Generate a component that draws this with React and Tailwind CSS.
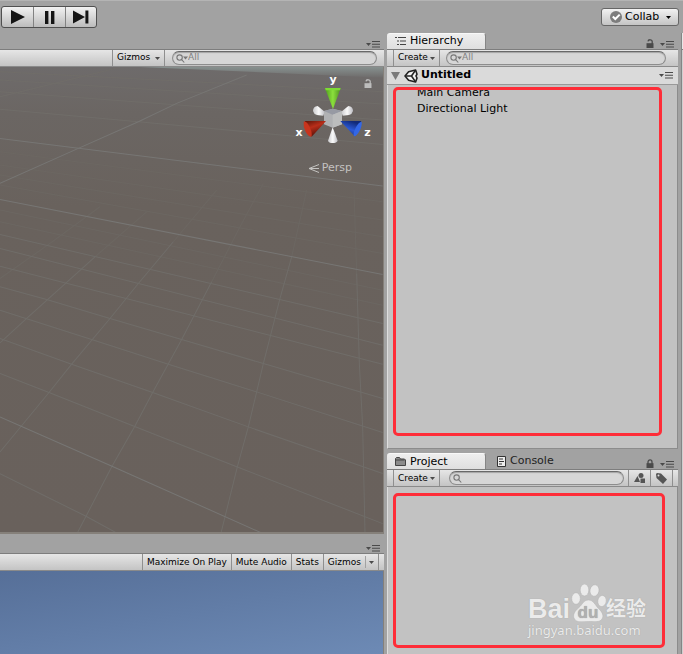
import clsx from 'clsx'

function MenuIcon() {
	return (
		<svg className="h-[7px] w-[14px]" viewBox="0 0 14 7" fill="#4a4a4a">
			<path d="M0 2h5l-2.5 3z" />
			<path d="M6 0h8v1H6zM6 2.7h8v1H6zM6 5.4h8v1H6z" />
		</svg>
	)
}

function PanelMenu({ label }) {
	return (
		<button aria-label={label} className="flex">
			<MenuIcon />
		</button>
	)
}

function Caret() {
	return (
		<svg className="h-[3px] w-[5px]" viewBox="0 0 5 3" fill="#4a4a4a">
			<path d="M0 0h5L2.5 3z" />
		</svg>
	)
}

function Lock({ open, className }) {
	return (
		<svg className={clsx('h-[9px] w-[8px]', className)} viewBox="0 0 8 9" fill="none">
			<path fill="currentColor" d="M.5 4.2h7V9h-7z" />
			<path stroke="currentColor" strokeWidth="1.3" d={open ? 'M2 2.4C2.2.2 6.2.2 6.2 2.6V5' : 'M2 5V3C2 .2 6 .2 6 3v2'} />
		</svg>
	)
}

function Toolbar({ children }) {
	return (
		<div className="flex h-[18px] shrink-0 border-y border-t-[#7d7d7d] border-b-[#8a8a8a] bg-linear-to-b from-[#e6e6e6] to-[#c4c4c4] text-[9px]">
			{children}
		</div>
	)
}

function ToolButton({ children, label, className }) {
	return (
		<button aria-label={label} className={clsx('flex items-center whitespace-nowrap border-[#8f8f8f]', className)}>
			{children}
		</button>
	)
}

function Search({ label, placeholder, arrow, className }) {
	return (
		<label
			className={clsx(
				'flex h-[14px] min-w-0 flex-1 items-center self-center rounded-full border border-[#8d8d8d] border-t-[#686868] bg-[#d6d6d6] pl-[3px] shadow-[inset_0_1px_1px_#a5a5a5]',
				className,
			)}
		>
			<svg className="h-[9px] w-[12px] shrink-0" viewBox="0 0 12 9" fill="none" stroke="#777" strokeWidth="1.1">
				<circle cx="3.6" cy="3.6" r="2.7" />
				<path d="M5.6 5.6 8.3 8.5" />
				{arrow && <path fill="#777" stroke="none" d="M7 2.5h5L9.5 5.5z" />}
			</svg>
			<input aria-label={label} placeholder={placeholder} className="w-full min-w-0 bg-transparent text-[9px] outline-none placeholder:text-[#808080]" />
		</label>
	)
}

function Tab({ active, children }) {
	return (
		<button
			className={clsx(
				'flex h-4 w-[99px] items-center gap-1 pl-2 text-[11px]',
				active
					? 'rounded-t-[3px] border-t border-r border-t-[#f8f8f8] border-r-[#858585] bg-linear-to-b from-[#eeeeee] to-[#dfdfdf] text-black'
					: 'text-[#222]',
			)}
		>
			{children}
		</button>
	)
}

function TopBar() {
	return (
		<header className="flex h-[33px] shrink-0 items-start justify-between border-t border-[#b4b4b4] pr-1 pl-px">
			<div className="mt-[5px] flex h-[22px] divide-x divide-[#828282] overflow-hidden rounded-[3px] border border-[#505050] bg-linear-to-b from-[#f2f2f2] to-[#bcbcbc]">
				<button aria-label="Play" className="flex w-8 items-center justify-center">
					<svg className="h-[14px] w-4" viewBox="0 0 16 14" fill="#151515"><path d="M1 0 15 7 1 14z" /></svg>
				</button>
				<button aria-label="Pause" className="flex w-8 items-center justify-center">
					<svg className="h-[13px] w-[10px]" viewBox="0 0 10 13" fill="#151515"><path d="M0 0h3.4v13H0zM6 0h3.4v13H6z" /></svg>
				</button>
				<button aria-label="Step" className="flex w-[30px] items-center justify-center">
					<svg className="h-[14px] w-4" viewBox="0 0 16 14" fill="#151515"><path d="M0 .5 12 7 0 13.5zM12.4.5h3v13h-3z" /></svg>
				</button>
			</div>
			<button className="mt-[7px] flex h-[18px] w-[78px] items-center rounded-[3px] border border-[#666] bg-linear-to-b from-[#f2f2f2] to-[#c4c4c4] pl-2 text-[11px]">
				<svg className="mr-[3px] h-3 w-3" viewBox="0 0 12 12" fill="none">
					<circle cx="6" cy="6" r="6" fill="#7d7d7d" />
					<path stroke="#fff" strokeWidth="2" d="M2.8 5.5 5.3 8 9.7 3.6" />
				</svg>
				Collab
				<svg className="ml-[7px] h-[3px] w-[5px]" viewBox="0 0 5 3"><path d="M0 0h5L2.5 3z" /></svg>
			</button>
		</header>
	)
}

const majorLines = [
	'0,235 1148,378',
	'0,418 1148,643',
	'0,1070 336,1218 785,1418',
	'0,370 235,265 415,185 530,130 740,45',
]

const minorLines = [
	'0,35 1148,95',
	'0,60 1148,132',
	'0,95 1148,180',
	'0,148 415,185 1148,253',
	'0,110 360,22',
	'0,523 1148,790',
	'0,565 1148,855',
	'0,618 1148,912',
	'0,680 140,718 330,775 545,838 790,910 1148,1015',
	'0,750 275,838 505,912 770,995 1148,1117',
	'0,835 215,912 458,997 745,1100 1148,1240',
	'0,940 147,997 404,1099 712,1220 1148,1390',
	'0,1240 258,1368 350,1418',
	'0,848 80,775 285,590',
	'0,1175 147,997 215,912 330,775 415,670 520,545',
	'232,1418 336,1218 404,1099 458,997 545,838 635,665',
	'663,1418 712,1220 745,1100 770,995 790,910 840,715 875,590',
	'1095,1418 1088,1100 1078,910 1070,640',
]

const faintLines = [
	'0,450 1148,690',
	'0,485 1148,735',
	'0,275 1148,425',
	'0,315 1148,480',
	'0,345 1148,530',
	'0,375 1148,580',
	'285,590 440,455',
	'520,545 650,390',
	'635,665 720,500 790,370',
	'875,590 920,390',
	'1070,640 1062,390',
	'0,655 150,550 300,440',
]

function GridLines({ lines, color }) {
	return (
		<g stroke={color} strokeWidth="3" fill="none">
			{lines.map((points) => (
				<polyline key={points} points={points} />
			))}
		</g>
	)
}

function SceneGrid() {
	return (
		<svg className="absolute inset-0 h-full w-full" viewBox="0 21 1149 1395" preserveAspectRatio="none">
			<defs>
				<linearGradient id="ground" x1="0" y1="0" x2="0" y2="1">
					<stop offset="0" stopColor="#6e6b6b" />
					<stop offset="0.1" stopColor="#6b6663" />
					<stop offset="0.3" stopColor="#69625d" />
					<stop offset="1" stopColor="#69615c" />
				</linearGradient>
				<linearGradient id="horizon" x1="0" y1="0" x2="0" y2="1">
					<stop offset="0" stopColor="#87918f" />
					<stop offset="1" stopColor="#6e6b6b" />
				</linearGradient>
			</defs>
			<rect y="21" width="1149" height="1395" fill="url(#ground)" />
			<path d="M420 21h729v32z" fill="url(#horizon)" />
			<GridLines lines={faintLines} color="#6c6762" />
			<GridLines lines={minorLines} color="#706d69" />
			<GridLines lines={majorLines} color="#777674" />
		</svg>
	)
}

function AxisGizmo() {
	return (
		<svg className="absolute top-[6px] right-[10px] h-[78px] w-20" viewBox="39 129 240 234">
			<defs>
				<linearGradient id="axisY">
					<stop offset="0" stopColor="#4e9a1c" />
					<stop offset="0.5" stopColor="#8be03c" />
					<stop offset="1" stopColor="#4e8f20" />
				</linearGradient>
				<linearGradient id="axisX" x1="0" y1="0" x2="0.5" y2="1">
					<stop offset="0" stopColor="#5c1408" />
					<stop offset="0.45" stopColor="#b92e1a" />
					<stop offset="1" stopColor="#4f1008" />
				</linearGradient>
				<linearGradient id="axisZ" x1="0.5" y1="0" x2="0" y2="1">
					<stop offset="0" stopColor="#122a78" />
					<stop offset="0.45" stopColor="#2c5ad8" />
					<stop offset="1" stopColor="#10235c" />
				</linearGradient>
				<linearGradient id="axisBack">
					<stop offset="0" stopColor="#c9c9cc" />
					<stop offset="0.5" stopColor="#fafafa" />
					<stop offset="1" stopColor="#bcbcc2" />
				</linearGradient>
			</defs>
			<path fill="url(#axisBack)" d="M99 243q0-14 14-15l21 17-4 12-19-2q-10-3-12-12z" />
			<path fill="url(#axisBack)" d="M219 243q0-14-14-15l-21 17 4 12 19-2q10-3 12-12z" />
			<path fill="url(#axisBack)" d="M158 292 144 332q2 7 14 7t15-7z" />
			<path fill="#b0b1b3" d="M132 243 158 236l28 7v40l-28 10-26-10z" />
			<path fill="#979aa3" d="M132 243 158 236l28 7-28 11z" />
			<path fill="#bcbdbd" d="M158 254l28-11v40l-28 10z" />
			<path fill="url(#axisY)" d="M135 175h47l-23 62z" />
			<path fill="#7ddc34" d="M135 174h47l-2 7h-43z" />
			<path fill="url(#axisX)" d="M74 273h64L95 320z" />
			<path fill="#c8341d" d="M71 275q9-2 18 16t5 29q-9 0-17-15t-6-30z" />
			<path fill="url(#axisZ)" d="M181 273h63l-20 46z" />
			<path fill="#3367e6" d="M245 275q2 13-7 29t-16 15q-4-8 5-26t18-18z" />
			<g className="font-bold" fill="#fff" fontSize="33" textAnchor="middle">
				<text x="159" y="159">y</text>
				<text x="57" y="318">x</text>
				<text x="262" y="318">z</text>
			</g>
		</svg>
	)
}

function SceneColumn() {
	return (
		<main className="flex min-w-0 flex-col">
			<div className="flex h-4 shrink-0 items-end justify-end pr-1 pb-px">
				<PanelMenu label="Scene menu" />
			</div>
			<Toolbar>
				<div className="min-w-0 flex-1" />
				<ToolButton className="w-[53px] justify-between border-x px-1">
					Gizmos <Caret />
				</ToolButton>
				<Search label="Search scene" placeholder="All" arrow className="mr-[7px] ml-[7px] max-w-[205px] basis-[205px] grow-0" />
			</Toolbar>
			<section className="flex min-h-0 flex-[467] flex-col border-r border-b-2 border-[#85807a]">
				<div className="relative flex-1">
					<SceneGrid />
					<AxisGizmo />
					<Lock open className="absolute top-3 right-[11px] text-[#bdbdbd]" />
					<button className="absolute top-[94px] right-[31px] flex items-center gap-[3px] text-[11px] leading-[14px] text-[#c4c2c0]">
						<svg className="h-[9px] w-[10px]" viewBox="0 0 10 9" stroke="#c4c2c0" fill="none">
							<path d="M10 .5 0 4.5l10 4M0 4.5h10" />
						</svg>
						Persp
					</button>
				</div>
			</section>
			<div className="flex h-[19px] shrink-0 items-end justify-end pr-1 pb-px">
				<PanelMenu label="Game menu" />
			</div>
			<Toolbar>
				<div className="min-w-0 flex-1" />
				<ToolButton className="border-l px-1">Maximize On Play</ToolButton>
				<ToolButton className="border-l px-1">Mute Audio</ToolButton>
				<ToolButton className="border-l px-1">Stats</ToolButton>
				<ToolButton className="border-l px-1">Gizmos</ToolButton>
				<ToolButton label="Gizmo options" className="mr-[5px] border-r pr-1">
					<span className="mr-[3px] h-3 w-px bg-[#a2a2a2]" />
					<Caret />
				</ToolButton>
			</Toolbar>
			<section className="min-h-0 flex-[83] border-r border-[#85807a] bg-linear-[170deg] from-[#566f98] to-[#6d8ab5]" />
		</main>
	)
}

function UnityLogo() {
	return (
		<svg className="h-[14px] w-[14px]" viewBox="0 0 14 14" fill="none" stroke="#222" strokeLinejoin="round">
			<path fill="#f4f4f4" strokeWidth="1.6" d="M1 7 4.6 2.8 11.6 1 13 5.2 12 7l1 2-1.4 4-7-1.8z" />
			<path strokeWidth="1.6" d="M2 7h5.5l3.7-5.4M7.5 7l3.7 5.4" />
		</svg>
	)
}

function Hierarchy() {
	return (
		<>
			<div className="flex h-4 shrink-0 items-end justify-between">
				<Tab active>
					<svg className="h-[9px] w-[11px]" viewBox="0 0 11 9" fill="#444">
						<path d="M0 0h2v1H0zM3 0h8v1H3zM2 3.5h2v1H2zM5 3.5h6v1H5zM2 7h2v1H2zM5 7h6v1H5z" />
					</svg>
					Hierarchy
				</Tab>
				<div className="flex items-end gap-[6px] pr-1 pb-px">
					<Lock open className="text-[#4a4a4a]" />
					<PanelMenu label="Hierarchy menu" />
				</div>
			</div>
			<Toolbar>
				<ToolButton className="ml-[6px] w-[47px] justify-between border-x px-1">
					Create <Caret />
				</ToolButton>
				<Search label="Search hierarchy" placeholder="All" arrow className="mr-[12px] ml-[6px]" />
			</Toolbar>
			<div className="flex h-[18px] shrink-0 items-center border-b border-[#999] bg-[#dadada] pr-[5px] pl-1 text-[11px] font-bold">
				<svg className="mr-1 h-2 w-[9px]" viewBox="0 0 9 8" fill="#7a7a7a"><path d="M0 0h9L4.5 8z" /></svg>
				<UnityLogo />
				<h2 className="ml-[3px] flex-1">Untitled</h2>
				<PanelMenu label="Scene options" />
			</div>
			<section className="relative min-h-0 flex-[364] border border-t-0 border-[#8c8c8c] border-l-[#dedede] bg-[#c2c2c2]">
				<ul className="pl-[29px] text-[11px] leading-4">
					<li>Main Camera</li>
					<li>Directional Light</li>
				</ul>
				<div className="pointer-events-none absolute top-[2px] right-[15px] bottom-3 left-[5px] rounded-[5px] border-3 border-[#fe2d38]" />
			</section>
		</>
	)
}

function Watermark() {
	return (
		<div className="absolute right-[31px] bottom-4 text-[#ebebeb] [text-shadow:0_0_1px_#999]">
			<div className="flex items-end leading-none">
				<span className="font-['Liberation_Sans'] text-[27px] leading-[26px] font-bold">Bai</span>
				<svg className="h-[38px] w-[36px]" viewBox="0 0 36 38" fill="#ebebeb" stroke="#b3b3b3" strokeWidth="0.5">
					<ellipse cx="6" cy="14.5" rx="4.3" ry="5.8" />
					<ellipse cx="14.5" cy="6" rx="4.3" ry="6" />
					<ellipse cx="24.5" cy="6.5" rx="4.5" ry="5.8" transform="rotate(10 24.5 6.5)" />
					<ellipse cx="32" cy="17" rx="4.2" ry="5.6" transform="rotate(8 32 17)" />
					<path d="M18.5 16c5 0 6.5 5 10 8.500 4 4 5.500 7 3.500 10.500-2 3.500-7 2.500-13.500 2.500S7 39 4.500 35C2 31 5 27 9 23.500c3.500-3 4.500-7.500 9.500-7.500z" />
					<text x="18" y="34" textAnchor="middle" fontSize="17" fill="#b0b0b0" stroke="none" className="font-['Liberation_Sans'] font-bold">du</text>
				</svg>
				<span className="font-['Noto_Sans_CJK_SC',sans-serif] text-[20px] leading-[28px] font-bold">经验</span>
			</div>
			<p className="font-['Noto_Sans'] text-[13px] leading-4">jingyan.baidu.com</p>
		</div>
	)
}

function Project() {
	return (
		<>
			<div className="mt-1 flex h-4 shrink-0 items-end">
				<Tab active>
					<svg className="h-[9px] w-[11px]" viewBox="0 0 11 9" fill="#8b8b8b" stroke="#444">
						<path d="M.5 8.500v-7l1-1h3l1 1.500h4l1 1v5.500zM.5 3h9" />
					</svg>
					Project
				</Tab>
				<Tab>
					<svg className="ml-[3px] h-[11px] w-[9px]" viewBox="0 0 9 11" fill="#eee" stroke="#333">
						<path d="M.5.5h8v10h-8z" />
						<path d="M2 3h4M2 5.500h5M2 8h3" />
					</svg>
					Console
				</Tab>
				<div className="ml-auto flex items-end gap-[6px] pr-1 pb-px">
					<Lock className="text-[#4a4a4a]" />
					<PanelMenu label="Project menu" />
				</div>
			</div>
			<Toolbar>
				<ToolButton className="ml-[6px] w-[47px] justify-between border-x px-1">
					Create <Caret />
				</ToolButton>
				<Search label="Search project" className="mr-1 ml-[9px]" />
				<ToolButton label="Search by type" className="w-[22px] justify-center border-l">
					<svg className="h-[10px] w-[11px]" viewBox="0 0 11 10" fill="#555">
						<circle cx="7" cy="2.500" r="2.500" />
						<path d="M0 9 3.500 3 6 9zM6.500 5.500H11V10H6.500z" />
					</svg>
				</ToolButton>
				<ToolButton label="Search by label" className="mr-[5px] w-[23px] justify-center border-x">
					<svg className="h-[11px] w-[11px]" viewBox="0 0 11 11">
						<path fill="#555" d="M0 1 1 0l4 .5L11 6.500 7 11 .5 5z" />
						<circle cx="2.500" cy="2.500" r="1" fill="#ddd" />
					</svg>
				</ToolButton>
			</Toolbar>
			<section className="relative min-h-0 flex-[167] border-x border-[#8c8c8c] border-l-[#dedede] bg-[#c2c2c2]">
				<Watermark />
				<div className="pointer-events-none absolute top-[6px] right-3 bottom-[6px] left-[5px] rounded-[5px] border-3 border-[#fe2d38]" />
			</section>
		</>
	)
}

export default function App() {
	return (
		<div className="flex h-screen flex-col overflow-hidden bg-[#a2a2a2] font-['DejaVu_Sans',sans-serif] text-black">
			<TopBar />
			<div className="grid min-h-0 flex-1 grid-cols-[384fr_291fr_2px] gap-x-[3px]">
				<SceneColumn />
				<aside className="flex min-w-0 flex-col">
					<Hierarchy />
					<Project />
				</aside>
				<div className="flex flex-col border-l border-[#858585]">
					<div className="h-4 bg-[#e6e6e6]" />
					<div className="flex-1 border-t border-[#7d7d7d] bg-[#d0d0d0]" />
				</div>
			</div>
		</div>
	)
}
